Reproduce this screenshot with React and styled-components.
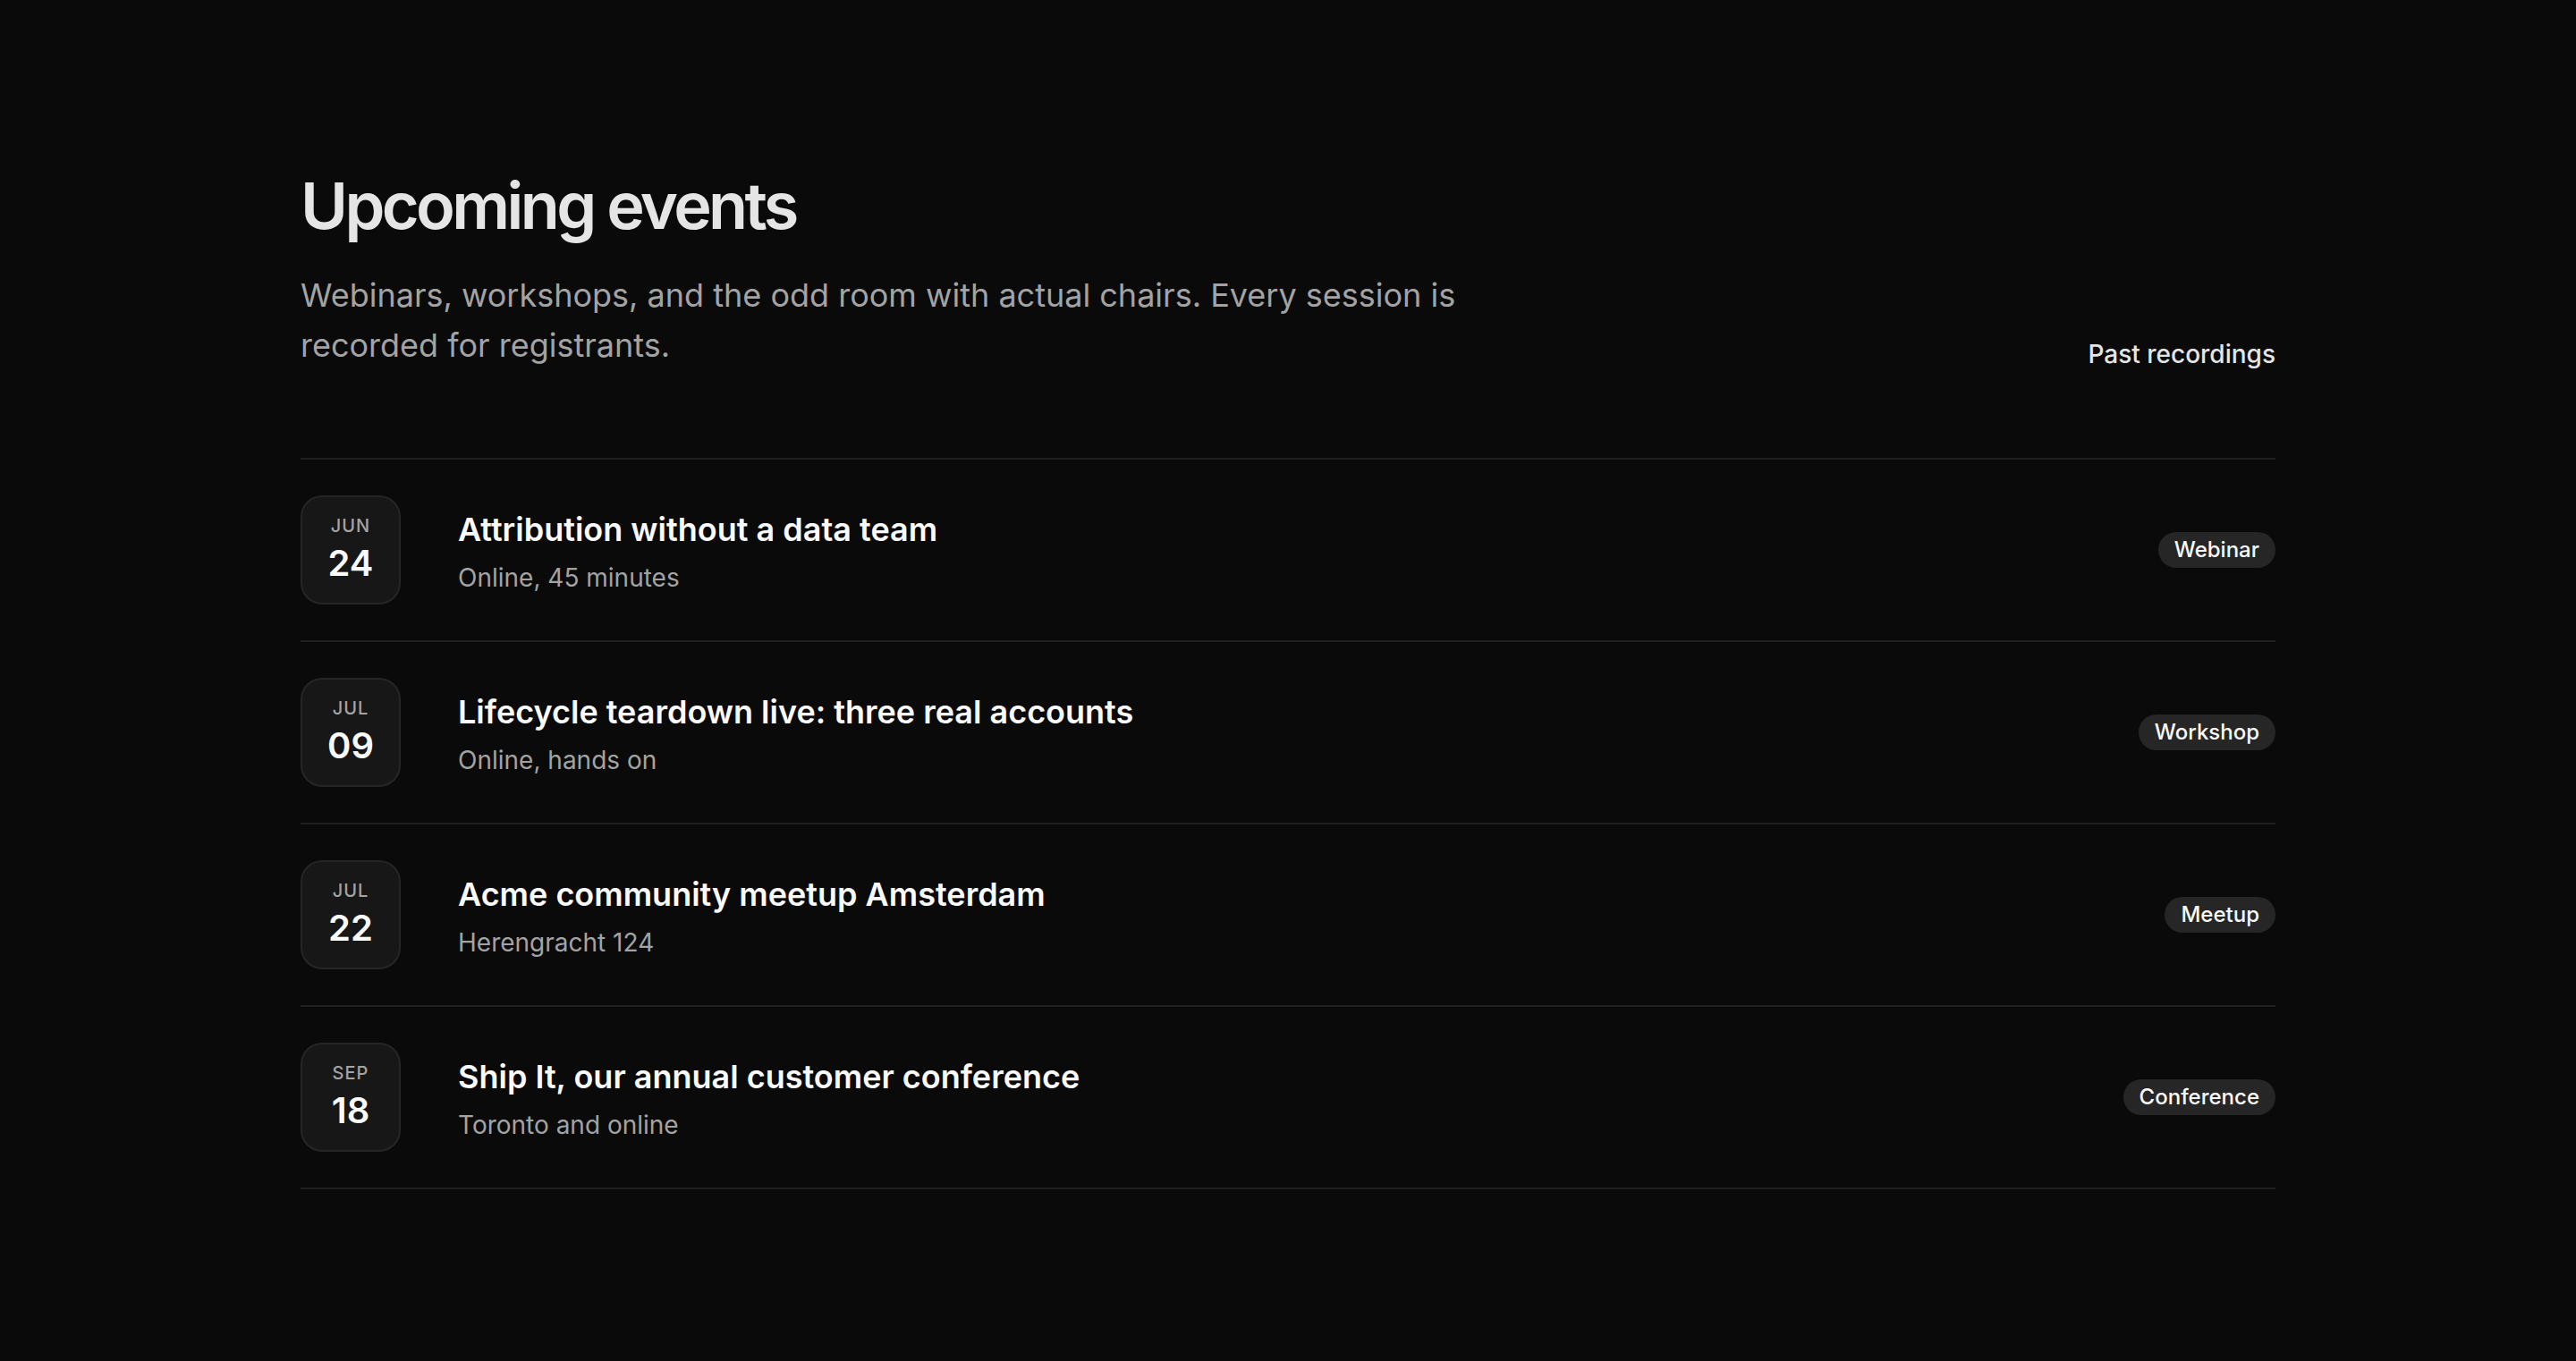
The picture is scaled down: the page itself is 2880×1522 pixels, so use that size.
import styled, { createGlobalStyle } from "styled-components";

const GlobalStyle = createGlobalStyle`
  html, body {
    margin: 0;
    padding: 0;
    background: #0a0a0a;
  }
  body {
    font-family: Inter, "Noto Sans", "Liberation Sans", sans-serif;
    -webkit-font-smoothing: antialiased;
  }
  * { box-sizing: border-box; }
`;

const Page = styled.main`
  min-height: 100vh;
  background: #0a0a0a;
  color: #e5e5e5;
`;

const Container = styled.section`
  max-width: 2304px;
  margin: 0 auto;
  padding: 190px 48px 192px;
`;

const Header = styled.header`
  display: flex;
  justify-content: space-between;
  align-items: flex-end;
  gap: 48px;
  margin-bottom: 98px;
`;

const Intro = styled.div`
  max-width: 1344px;
`;

const Title = styled.h1`
  margin: 0;
  font-size: 72px;
  line-height: 80px;
  font-weight: 600;
  letter-spacing: -0.05em;
  color: #e5e5e5;
`;

const Lead = styled.p`
  margin: 32px 0 0;
  font-size: 36px;
  line-height: 56px;
  color: #a3a3a3;
`;

const HeaderLink = styled.a`
  font-size: 28px;
  line-height: 36px;
  font-weight: 500;
  color: #e5e5e5;
  text-decoration: none;
  white-space: nowrap;
`;

const EventList = styled.ul`
  list-style: none;
  margin: 0;
  padding: 0;
  border-top: 2px solid #1f1f1f;
`;

const EventRow = styled.li`
  display: flex;
  align-items: center;
  gap: 64px;
  padding: 40px 0;
  border-bottom: 2px solid #1f1f1f;
`;

const DateBox = styled.div`
  flex: none;
  width: 112px;
  height: 122px;
  display: flex;
  flex-direction: column;
  align-items: center;
  justify-content: center;
  gap: 6px;
  padding-bottom: 4px;
  background: #171717;
  border: 2px solid #262626;
  border-radius: 24px;
`;

const Month = styled.span`
  font-size: 20px;
  line-height: 28px;
  font-weight: 500;
  letter-spacing: 0.05em;
  text-transform: uppercase;
  color: #a3a3a3;
`;

const Day = styled.span`
  font-size: 40px;
  line-height: 44px;
  font-weight: 600;
  color: #fafafa;
`;

const Info = styled.div`
  flex: 1;
  min-width: 0;
`;

const EventTitle = styled.h3`
  margin: 0;
  font-size: 36px;
  line-height: 56px;
  font-weight: 600;
  color: #fafafa;
`;

const Meta = styled.p`
  margin: 6px 0 0;
  font-size: 28px;
  line-height: 40px;
  color: #a3a3a3;
`;

const Badge = styled.span`
  flex: none;
  padding: 4px 18px;
  font-size: 24px;
  line-height: 32px;
  font-weight: 500;
  color: #fafafa;
  background: #262626;
  border-radius: 999px;
`;

const events = [
  { month: "Jun", day: "24", title: "Attribution without a data team", meta: "Online, 45 minutes", kind: "Webinar" },
  { month: "Jul", day: "09", title: "Lifecycle teardown live: three real accounts", meta: "Online, hands on", kind: "Workshop" },
  { month: "Jul", day: "22", title: "Acme community meetup Amsterdam", meta: "Herengracht 124", kind: "Meetup" },
  { month: "Sep", day: "18", title: "Ship It, our annual customer conference", meta: "Toronto and online", kind: "Conference" },
];

export default function App() {
  return (
    <Page>
      <GlobalStyle />
      <Container>
        <Header>
          <Intro>
            <Title>Upcoming events</Title>
            <Lead>
              Webinars, workshops, and the odd room with actual chairs. Every session is
              recorded for registrants.
            </Lead>
          </Intro>
          <HeaderLink href="#">Past recordings</HeaderLink>
        </Header>

        <EventList>
          {events.map((e) => (
            <EventRow key={e.title}>
              <DateBox>
                <Month>{e.month}</Month>
                <Day>{e.day}</Day>
              </DateBox>
              <Info>
                <EventTitle>{e.title}</EventTitle>
                <Meta>{e.meta}</Meta>
              </Info>
              <Badge>{e.kind}</Badge>
            </EventRow>
          ))}
        </EventList>
      </Container>
    </Page>
  );
}
